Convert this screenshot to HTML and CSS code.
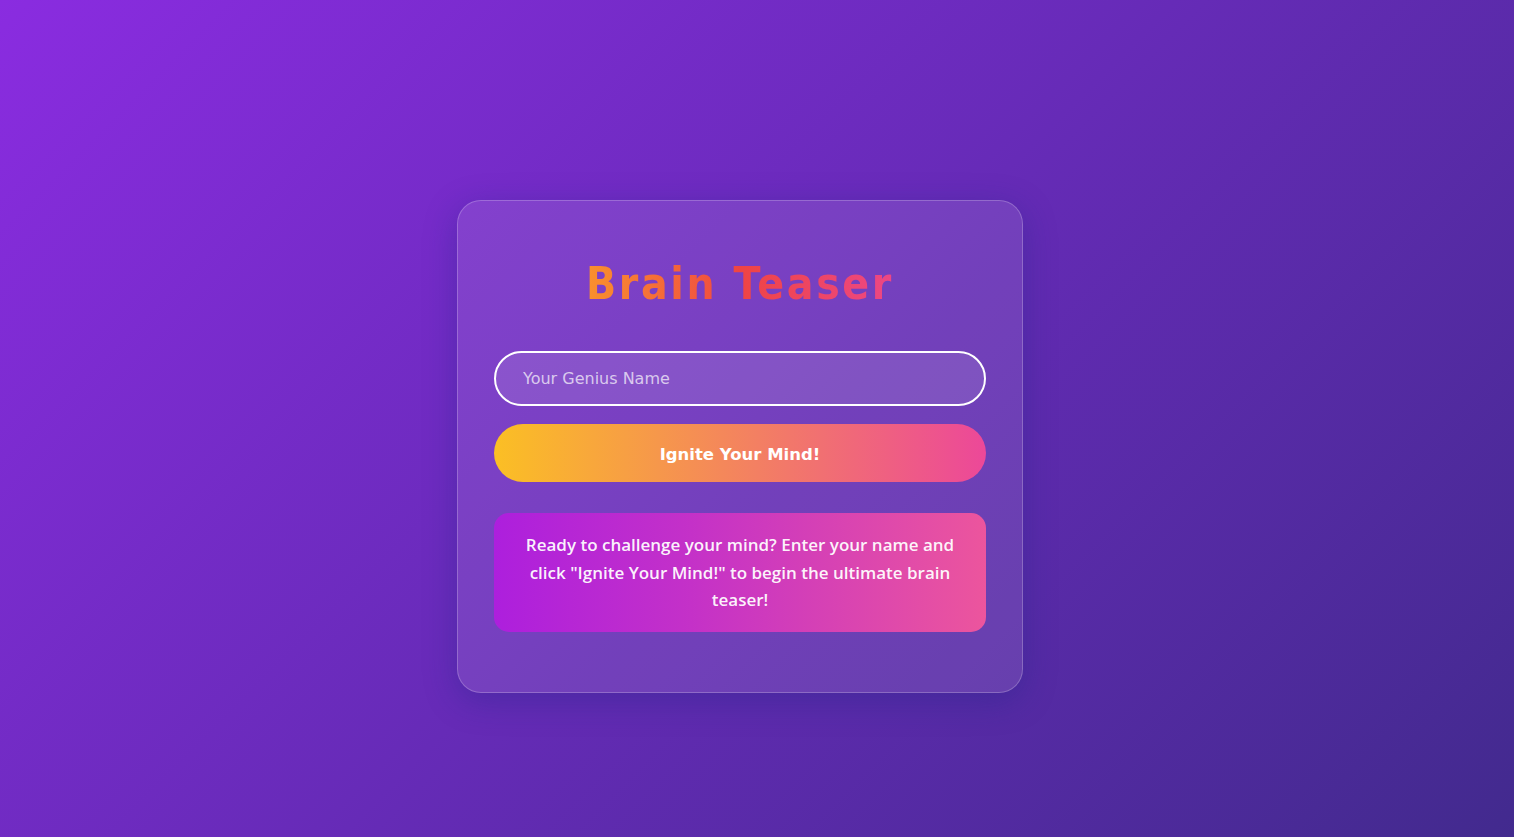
FILE: index.html
```html
<!DOCTYPE html>
<html lang="en">
<head>
<meta charset="utf-8">
<title>Brain Teaser</title>
<link rel="stylesheet" href="styles.css">
</head>
<body>
  <main class="card">
    <h1 class="title">Brain Teaser</h1>
    <input class="name-input" type="text" placeholder="Your Genius Name">
    <button class="start-btn" type="button">Ignite Your Mind!</button>
    <div class="message">Ready to challenge your mind? Enter your name and click "Ignite Your Mind!" to begin the ultimate brain teaser!</div>
  </main>
</body>
</html>
```

FILE: styles.css
```css
html, body {
  margin: 0;
  height: 100%;
}

body {
  box-sizing: border-box;
  min-height: 100vh;
  padding: 56px 34px 0 0;
  display: flex;
  justify-content: center;
  align-items: center;
  background: linear-gradient(135deg, #8a2ce0 0%, #422a8e 100%);
  font-family: "DejaVu Sans", Verdana, sans-serif;
  overflow: hidden;
}

.card {
  box-sizing: border-box;
  width: 566px;
  padding: 36px 36px 60px;
  display: flex;
  flex-direction: column;
  background: rgba(255, 255, 255, 0.1);
  border: 1px solid rgba(255, 255, 255, 0.22);
  border-radius: 24px;
  box-shadow: 0 8px 32px 0 rgba(31, 38, 135, 0.37);
}

.title {
  margin: 21px 0 41px;
  font-family: "DejaVu Sans", Verdana, sans-serif;
  font-stretch: condensed;
  font-size: 44px;
  line-height: 52px;
  font-weight: 700;
  letter-spacing: 2.6px;
  text-align: center;
  background: linear-gradient(90deg, #fb9a2a 15%, #ef4444 50%, #ec4899 90%);
  -webkit-background-clip: text;
  background-clip: text;
  color: transparent;
}

.name-input {
  box-sizing: border-box;
  width: 100%;
  height: 55px;
  margin: 0;
  padding: 0 27px;
  border: 2px solid #ffffff;
  border-radius: 28px;
  background: rgba(255, 255, 255, 0.1);
  color: #ffffff;
  font-family: "DejaVu Sans", Tahoma, sans-serif;
  font-size: 16px;
  outline: none;
}

.name-input::placeholder {
  color: rgba(255, 255, 255, 0.7);
}

.start-btn {
  box-sizing: border-box;
  width: 100%;
  height: 58px;
  margin: 18px 0 0;
  padding: 2px 0 0;
  border: none;
  border-radius: 29px;
  background: linear-gradient(90deg, #fbbf24 0%, #ec4899 100%);
  color: #ffffff;
  font-family: "DejaVu Sans", Tahoma, sans-serif;
  font-size: 16.5px;
  font-weight: 700;
  cursor: pointer;
}

.message {
  box-sizing: border-box;
  margin-top: 31px;
  padding: 18px 28px;
  border-radius: 15px;
  background: linear-gradient(90deg, #ad1fdd 0%, #c431c8 40%, #ec559d 100%);
  color: rgba(255, 255, 255, 0.95);
  font-family: "Open Sans", "Noto Sans", sans-serif;
  font-size: 17px;
  font-weight: 600;
  line-height: 27.5px;
  text-align: center;
}
```
